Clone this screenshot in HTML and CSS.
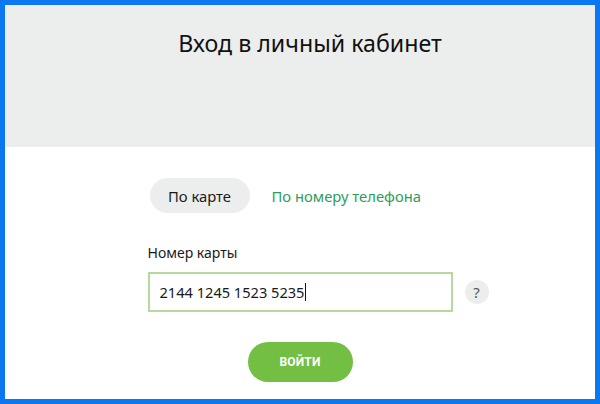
FILE: index.html
```html
<!DOCTYPE html>
<html lang="ru">
<head>
<meta charset="utf-8">
<title>Вход в личный кабинет</title>
<link rel="stylesheet" href="styles.css">
</head>
<body>
<div class="frame">
  <header class="head">
    <h1 class="title">Вход в личный кабинет</h1>
  </header>
  <main class="form">
    <div class="tabs">
      <span class="tab tab-active">По карте</span>
      <a class="tab tab-link" href="#">По номеру телефона</a>
    </div>
    <label class="label" for="card">Номер карты</label>
    <div class="field-row">
      <div class="input"><span class="value">2144 1245 1523 5235</span><span class="caret"></span></div>
      <span class="help">?</span>
    </div>
    <div class="actions">
      <button class="btn" type="button">ВОЙТИ</button>
    </div>
  </main>
</div>
</body>
</html>
```
FILE: styles.css
```css
html, body {
  margin: 0;
  padding: 0;
  background: #ffffff;
}
body {
  font-family: "Noto Sans", "Open Sans", sans-serif;
  color: #1a1a1a;
}
.frame {
  width: 600px;
  height: 404px;
  box-sizing: border-box;
  border: 5px solid #0b78f2;
  background: #ffffff;
  overflow: hidden;
}
.head {
  height: 142px;
  background: #eceeed;
  padding-top: 23px;
  box-sizing: border-box;
}
.title {
  margin: 0;
  padding-left: 20px;
  text-align: center;
  font-weight: 400;
  font-size: 23.2px;
  line-height: 30px;
  color: #111;
}
.form {
  width: 305px;
  margin: 0 auto;
  padding-top: 31px;
}
.tabs {
  display: flex;
  align-items: center;
  gap: 22px;
  padding-left: 2px;
}
.tab {
  font-size: 14.8px;
  line-height: 20px;
  text-decoration: none;
}
.tab-active {
  width: 100px;
  height: 35px;
  border-radius: 18px;
  background: #eceeed;
  display: flex;
  align-items: center;
  justify-content: center;
  color: #1a1a1a;
}
.tab-link {
  color: #2e9d5b;
}
.label {
  display: block;
  margin-top: 30px;
  font-size: 14px;
  line-height: 20px;
  color: #1a1a1a;
}
.field-row {
  display: flex;
  align-items: center;
  margin-top: 9px;
}
.input {
  flex: 0 0 305px;
  height: 40px;
  box-sizing: border-box;
  border: 2px solid #b6da9e;
  padding-left: 10px;
  display: flex;
  align-items: center;
  font-size: 14.6px;
  color: #1a1a1a;
}
.caret {
  display: inline-block;
  width: 1px;
  height: 18px;
  background: #111;
  margin-left: 1px;
}
.help {
  flex: 0 0 24px;
  height: 24px;
  margin-left: 12px;
  margin-right: -36px;
  border-radius: 50%;
  background: #eceeed;
  color: #555;
  font-size: 15px;
  display: flex;
  align-items: center;
  justify-content: center;
}
.actions {
  display: flex;
  justify-content: center;
  margin-top: 30px;
}
.btn {
  width: 105px;
  height: 40px;
  border: 0;
  border-radius: 20px;
  background: #72bf44;
  color: #fff;
  font-family: "Roboto", "Liberation Sans", sans-serif;
  font-weight: 700;
  font-size: 12px;
  letter-spacing: 0.2px;
  padding: 0;
}
```
